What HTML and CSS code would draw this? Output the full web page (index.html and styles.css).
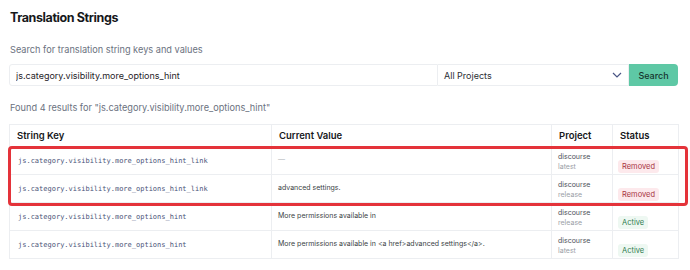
FILE: index.html
```html
<!DOCTYPE html>
<html lang="en">
<head>
  <meta charset="UTF-8" />
  <title>Translation Strings</title>
  <link rel="stylesheet" href="styles.css">
</head>
<body>
  <h1>Translation Strings</h1>
  <p class="lead">Search for translation string keys and values</p>

  <form class="search">
    <input class="query" value="js.category.visibility.more_options_hint" />
    <div class="select">
      <span>All Projects</span>
      <svg width="10" height="6" viewBox="0 0 10 6"><path d="M1 1l4 4 4-4" fill="none" stroke="#4a5585" stroke-width="1.2"/></svg>
    </div>
    <button type="button">Search</button>
  </form>

  <p class="found">Found 4 results for "js.category.visibility.more_options_hint"</p>

  <div class="results">
    <table>
      <thead>
        <tr>
          <th class="c-key">String Key</th>
          <th class="c-val">Current Value</th>
          <th class="c-proj">Project</th>
          <th class="c-status">Status</th>
        </tr>
      </thead>
      <tbody>
        <tr>
          <td class="key">js.category.visibility.more_options_hint_link</td>
          <td class="val muted">—</td>
          <td><div class="proj">discourse</div><div class="ver">latest</div></td>
          <td><span class="badge removed">Removed</span></td>
        </tr>
        <tr>
          <td class="key">js.category.visibility.more_options_hint_link</td>
          <td class="val">advanced settings.</td>
          <td><div class="proj">discourse</div><div class="ver">release</div></td>
          <td><span class="badge removed">Removed</span></td>
        </tr>
        <tr>
          <td class="key">js.category.visibility.more_options_hint</td>
          <td class="val">More permissions available in</td>
          <td><div class="proj">discourse</div><div class="ver">release</div></td>
          <td><span class="badge active">Active</span></td>
        </tr>
        <tr>
          <td class="key">js.category.visibility.more_options_hint</td>
          <td class="val">More permissions available in &lt;a href&gt;advanced settings&lt;/a&gt;.</td>
          <td><div class="proj">discourse</div><div class="ver">latest</div></td>
          <td><span class="badge active">Active</span></td>
        </tr>
      </tbody>
    </table>
    <div class="highlight"></div>
  </div>
</body>
</html>
```

FILE: styles.css
```css
body {
  margin: 0;
  padding: 9px 12px 0 9px;
  font-family: 'Inter', 'Noto Sans', sans-serif;
  background: #fff;
  color: #1f2328;
}

h1 {
  margin: 0 0 0 1px;
  font-size: 12.5px;
  line-height: 18px;
  font-weight: 700;
  letter-spacing: -0.4px;
  color: #16181b;
}

.lead {
  margin: 17px 0 0 1px;
  font-size: 9.2px;
  line-height: 12px;
  color: #6b7280;
}

.search {
  display: flex;
  margin-top: 8px;
  height: 22px;
}

.query {
  box-sizing: border-box;
  width: 429px;
  height: 22px;
  margin: 0;
  padding: 0 6px;
  border: 1px solid #eceef1;
  border-radius: 3px 0 0 3px;
  font-family: inherit;
  font-size: 9px;
  color: #1f2328;
  outline: none;
}

.select {
  box-sizing: border-box;
  width: 191px;
  height: 22px;
  display: flex;
  align-items: center;
  justify-content: space-between;
  padding: 0 6px 0 6px;
  border: 1px solid #eceef1;
  border-left: none;
  font-size: 9px;
  color: #2a2e33;
}

button {
  width: 49px;
  height: 22px;
  border: none;
  border-radius: 0 4px 4px 0;
  background: #5ec8a5;
  color: #16352e;
  font-family: inherit;
  font-size: 9px;
  font-weight: 500;
  padding: 0;
}

.found {
  margin: 16px 0 0 1px;
  font-size: 9.2px;
  line-height: 12px;
  color: #6b7280;
}

.results {
  position: relative;
  margin-top: 10px;
}

table {
  width: 669px;
  border-collapse: collapse;
  table-layout: fixed;
}

th, td {
  box-sizing: border-box;
  border: 1px solid #eceef1;
  text-align: left;
  vertical-align: top;
  padding: 8px 7px 0;
}

th {
  height: 22px;
  padding: 0 7px;
  vertical-align: middle;
  font-size: 9.5px;
  font-weight: 600;
  color: #16181b;
}

td {
  height: 28px;
}

.c-key { width: 262px; }
.c-val { width: 280px; }
.c-proj { width: 61px; }
.c-status { width: 66px; }

.key {
  font-family: 'DejaVu Sans Mono', monospace;
  font-size: 7px;
  line-height: 12px;
  color: #4a5378;
  padding-left: 8px;
}

.val {
  font-size: 7px;
  line-height: 10px;
  color: #3a3f45;
  padding-left: 6px;
}

.val.muted { color: #b0b4ba; }

.proj, .ver {
  font-size: 7px;
  line-height: 10px;
  color: #4b5058;
}

.ver { color: #9aa0a7; }

td:nth-child(3) { padding-top: 5px; padding-left: 6px; }
td:nth-child(4) { padding-top: 6px; padding-left: 5px; }

.badge {
  display: inline-block;
  font-size: 7.5px;
  line-height: 13px;
  padding: 0 4px;
  border-radius: 3px;
}

.badge.removed { background: #fde9ec; color: #a8343f; }
.badge.active { background: #eef8f2; color: #2f7d4f; }

.highlight {
  position: absolute;
  left: -1px;
  top: 22px;
  width: 674px;
  height: 54px;
  border: 3px solid #e4333a;
  border-radius: 4px;
  pointer-events: none;
}
```
